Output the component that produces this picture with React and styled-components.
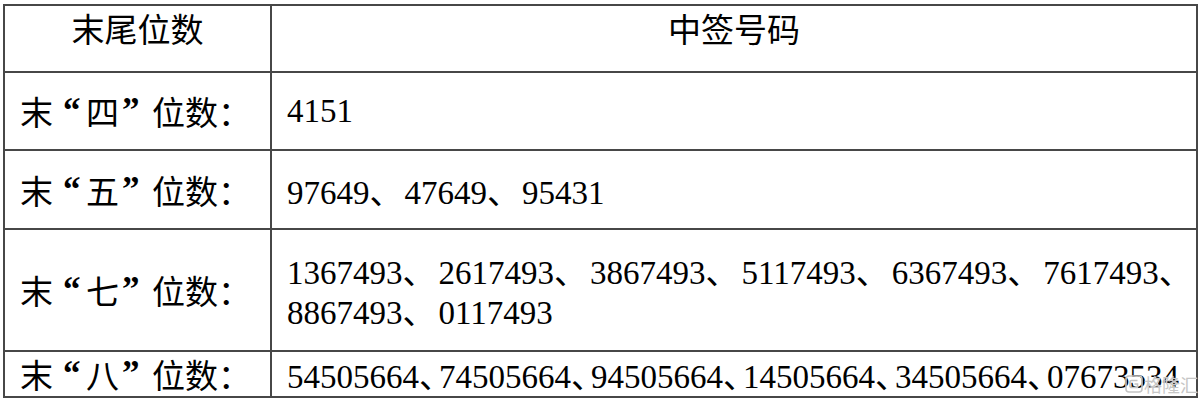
import React from 'react'
import styled, { createGlobalStyle } from 'styled-components'

const GlobalStyle = createGlobalStyle`
  body {
    margin: 0;
    background: #fff;
  }
`

const LINE = '#474747'

// label, text lines, width of the 、 separator in each line
const rows = [
  { label: '四', height: 78, lines: [['4151']], sep: 33 },
  { label: '五', height: 79, lines: [['97649', '47649', '95431']], sep: 35 },
  {
    label: '七',
    height: 122,
    lines: [
      ['1367493', '2617493', '3867493', '5117493', '6367493', '7617493', ''],
      ['8867493', '0117493'],
    ],
    sep: 36,
  },
  {
    label: '八',
    height: 46,
    lines: [['54505664', '74505664', '94505664', '14505664', '34505664', '07673534']],
    sep: 20,
  },
]

function App() {
  return (
    <Page lang="zh-CN">
      <GlobalStyle />
      <Grid $rows={[67, ...rows.map(r => r.height)]}>
        <HeadCell>末尾位数</HeadCell>
        <HeadCell>中签号码</HeadCell>

        {rows.map(row => (
          <React.Fragment key={row.label}>
            <LabelCell>
              末<Quote $pad={10}>“</Quote>{row.label}<Quote $pad={3}>”</Quote>位数：
            </LabelCell>
            <NumberCell>
              {row.lines.map((line, i) => (
                <Line key={i}>
                  {line.map((num, j) => (
                    <React.Fragment key={j}>
                      {j > 0 && <Sep $w={row.sep}>、</Sep>}
                      {num}
                    </React.Fragment>
                  ))}
                </Line>
              ))}
            </NumberCell>
          </React.Fragment>
        ))}
      </Grid>

      <Watermark>
        <svg width="18" height="18" viewBox="0 0 18 18" fill="none">
          <rect x="1" y="1" width="16" height="16" rx="3" stroke="#c4c4c4" strokeWidth="1.6" />
          <path d="M12.5 5.5H6.5A1.5 1.5 0 0 0 5 7v4a1.5 1.5 0 0 0 1.5 1.5h6V9H9.5" stroke="#c4c4c4" strokeWidth="1.6" />
        </svg>
        <span>格隆汇</span>
      </Watermark>
    </Page>
  )
}

export default App

const Page = styled.div`
  position: relative;
  width: 1198px;
  height: 402px;
  padding: 4px 0 0 3px;
  box-sizing: border-box;
  overflow: hidden;
  font-family: "Liberation Serif", "Noto Sans CJK SC", serif;
  font-size: 33px;
  color: #000;
`

const Grid = styled.div`
  display: grid;
  grid-template-columns: 267px 926px;
  grid-template-rows: ${p => p.$rows.map(h => `${h}px`).join(' ')};
  border-top: 2px solid ${LINE};
  border-left: 2px solid ${LINE};
  width: 1195px;
  box-sizing: border-box;
`

const Cell = styled.div`
  box-sizing: border-box;
  border-right: 2px solid ${LINE};
  border-bottom: 2px solid ${LINE};
  line-height: 40px;
  white-space: nowrap;
  overflow: hidden;
`

const HeadCell = styled(Cell)`
  font-family: "Noto Sans CJK SC", sans-serif;
  text-align: center;
  padding-top: 2px;
`

const LabelCell = styled(Cell)`
  font-family: "Noto Sans CJK SC", sans-serif;
  display: flex;
  align-items: center;
  padding-left: 15px;
`

const Quote = styled.span`
  display: inline-block;
  box-sizing: border-box;
  width: 33px;
  padding-left: ${p => p.$pad}px;
  text-align: left;
  font-family: "Liberation Serif", serif;
  font-size: 35px;
  font-weight: bold;
`

const NumberCell = styled(Cell)`
  display: flex;
  flex-direction: column;
  justify-content: center;
  padding-left: 15px;
  overflow: visible;
`

const Line = styled.div`
  height: 40px;
`

const Sep = styled.span`
  display: inline-block;
  width: ${p => p.$w}px;
  font-family: "Noto Sans CJK SC", sans-serif;
  overflow: visible;
`

const Watermark = styled.div`
  position: absolute;
  left: 1125px;
  top: 375px;
  display: flex;
  align-items: center;
  gap: 1px;
  font-family: "Noto Sans CJK SC", sans-serif;
  font-size: 18px;
  line-height: 18px;
  color: #c6c6c6;
  text-shadow: 0 0 1px #fff;
`
